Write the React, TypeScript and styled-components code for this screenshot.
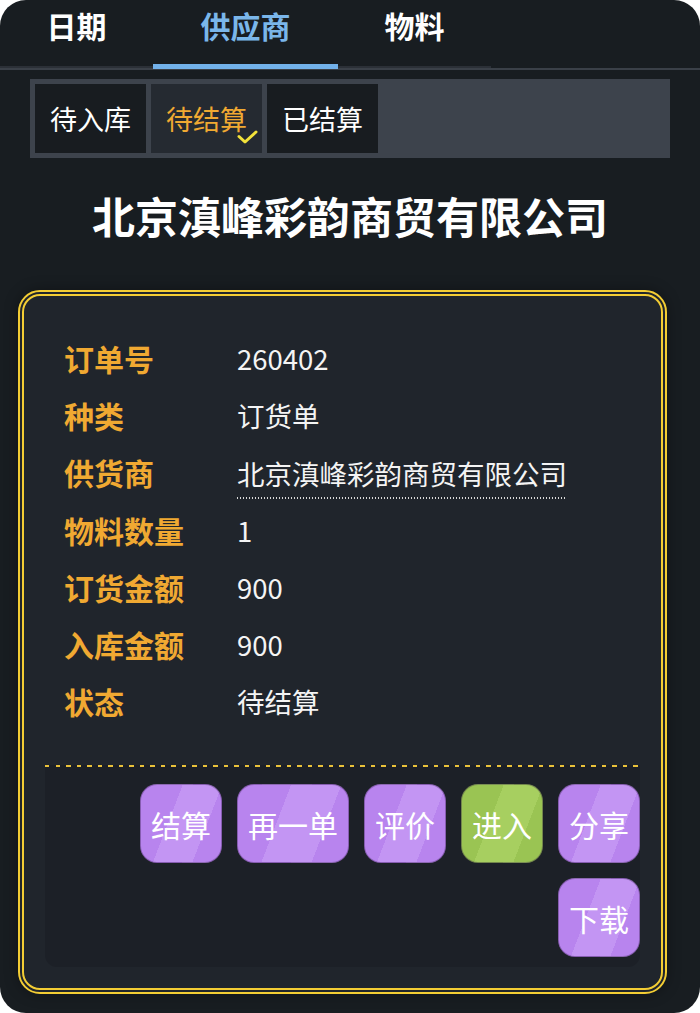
import React from "react";
import styled, { createGlobalStyle } from "styled-components";

const GlobalStyle = createGlobalStyle`
  html, body {
    margin: 0;
    padding: 0;
    background: #ffffff;
  }
  body {
    font-family: "Noto Sans CJK SC", "Noto Sans", sans-serif;
  }
  * {
    box-sizing: border-box;
  }
`;

const Screen = styled.div`
  width: 700px;
  height: 1013px;
  background: #181d21;
  border-radius: 26px;
  overflow: hidden;
  color: #ffffff;
`;

const Header = styled.div`
  border-bottom: 2px solid #3a4048;
`;

const TabBar = styled.div`
  display: grid;
  grid-template-columns: 153px 185px 153px;
  width: 491px;
  height: 68px;
  border-bottom: 2px solid #2b3037;
`;

const Tab = styled.div<{ $active?: boolean }>`
  position: relative;
  text-align: center;
  font-size: 30px;
  font-weight: 700;
  line-height: 44px;
  padding-top: 3px;
  color: ${(p) => (p.$active ? "#7ab6ea" : "#ffffff")};

  &::after {
    content: "";
    display: ${(p) => (p.$active ? "block" : "none")};
    position: absolute;
    left: 0;
    right: 0;
    bottom: -3px;
    height: 5px;
    background: #72b1ea;
  }
`;

const SubTabs = styled.div`
  display: flex;
  gap: 5px;
  margin: 9px 30px 0 30px;
  padding: 5px;
  background: #3d434c;
`;

const SubTab = styled.div<{ $active?: boolean }>`
  position: relative;
  width: 111px;
  height: 69px;
  display: flex;
  align-items: center;
  justify-content: center;
  font-size: 27px;
  background: ${(p) => (p.$active ? "#252a31" : "#181c20")};
  color: ${(p) => (p.$active ? "#f0a932" : "#ffffff")};
`;

const Check = styled.svg`
  position: absolute;
  right: 4px;
  bottom: 9px;
  width: 21px;
  height: 14px;
`;

const Title = styled.h1`
  margin: 31px 0 0 0;
  text-align: center;
  font-size: 43px;
  line-height: 52px;
  font-weight: 700;
  letter-spacing: 0;
`;

const Card = styled.div`
  margin: 49px 33px 0 18px;
  border: 6px double #f3cd34;
  border-radius: 22px;
  background: #20252c;
  padding: 21px;
  box-shadow: 0 0 14px rgba(0, 0, 0, 0.35);
`;

const Fields = styled.div`
  padding: 12px 19px 35px 19px;
`;

const Row = styled.div`
  display: flex;
  align-items: center;
  height: 57.3px;
`;

const Label = styled.div`
  width: 173px;
  flex-shrink: 0;
  font-size: 30px;
  font-weight: 700;
  color: #f0a932;
`;

const Value = styled.div<{ $dotted?: boolean }>`
  font-size: 27.5px;
  color: #f4f4f4;
  padding-top: ${(p) => (p.$dotted ? "8px" : "0")};
  padding-bottom: ${(p) => (p.$dotted ? "6px" : "0")};
  background-image: ${(p) =>
    p.$dotted
      ? "repeating-linear-gradient(90deg, #d8d8d8 0 1.5px, transparent 1.5px 3px)"
      : "none"};
  background-size: 100% 2px;
  background-position: left bottom;
  background-repeat: no-repeat;
`;

const Actions = styled.div`
  display: flex;
  flex-wrap: wrap;
  justify-content: flex-end;
  gap: 15px;
  padding: 19px 0 10px 0;
  background-color: #1c2027;
  background-image: repeating-linear-gradient(
    90deg,
    #e9c23a 0 4.5px,
    transparent 4.5px 10.5px
  );
  background-size: 100% 2px;
  background-repeat: no-repeat;
  background-position: left top;
  border-radius: 0 0 12px 12px;
`;

const ActionButton = styled.button<{ $tone: "purple" | "green" }>`
  height: 79px;
  min-width: 82px;
  padding: 0 10px;
  border: 1px solid rgba(40, 20, 60, 0.35);
  border-radius: 17px;
  font-family: inherit;
  font-size: 30px;
  color: #ffffff;
  background: ${(p) =>
    p.$tone === "green"
      ? "linear-gradient(111deg, #9ac453 0 38%, #a7cf60 38% 74%, #9ac453 74%)"
      : "linear-gradient(111deg, #b884ee 0 38%, #c395f3 38% 74%, #b884ee 74%)"};
`;

const fields: { label: string; value: string; dotted?: boolean }[] = [
  { label: "订单号", value: "260402" },
  { label: "种类", value: "订货单" },
  { label: "供货商", value: "北京滇峰彩韵商贸有限公司", dotted: true },
  { label: "物料数量", value: "1" },
  { label: "订货金额", value: "900" },
  { label: "入库金额", value: "900" },
  { label: "状态", value: "待结算" },
];

const actions: { text: string; tone: "purple" | "green" }[] = [
  { text: "结算", tone: "purple" },
  { text: "再一单", tone: "purple" },
  { text: "评价", tone: "purple" },
  { text: "进入", tone: "green" },
  { text: "分享", tone: "purple" },
  { text: "下载", tone: "purple" },
];

const App = () => {
  return (
    <>
      <GlobalStyle />
      <Screen>
        <Header>
          <TabBar>
            <Tab>日期</Tab>
            <Tab $active>供应商</Tab>
            <Tab>物料</Tab>
          </TabBar>
        </Header>
        <SubTabs>
          <SubTab>待入库</SubTab>
          <SubTab $active>
            待结算
            <Check viewBox="0 0 21 14">
              <polyline
                points="2,6.5 8,12 19,2"
                fill="none"
                stroke="#f2e23a"
                strokeWidth="3"
                strokeLinecap="round"
                strokeLinejoin="round"
              />
            </Check>
          </SubTab>
          <SubTab>已结算</SubTab>
        </SubTabs>
        <Title>北京滇峰彩韵商贸有限公司</Title>
        <Card>
          <Fields>
            {fields.map((f) => (
              <Row key={f.label}>
                <Label>{f.label}</Label>
                <Value $dotted={f.dotted}>{f.value}</Value>
              </Row>
            ))}
          </Fields>
          <Actions>
            {actions.map((a) => (
              <ActionButton key={a.text} $tone={a.tone}>
                {a.text}
              </ActionButton>
            ))}
          </Actions>
        </Card>
      </Screen>
    </>
  );
};

export default App;
